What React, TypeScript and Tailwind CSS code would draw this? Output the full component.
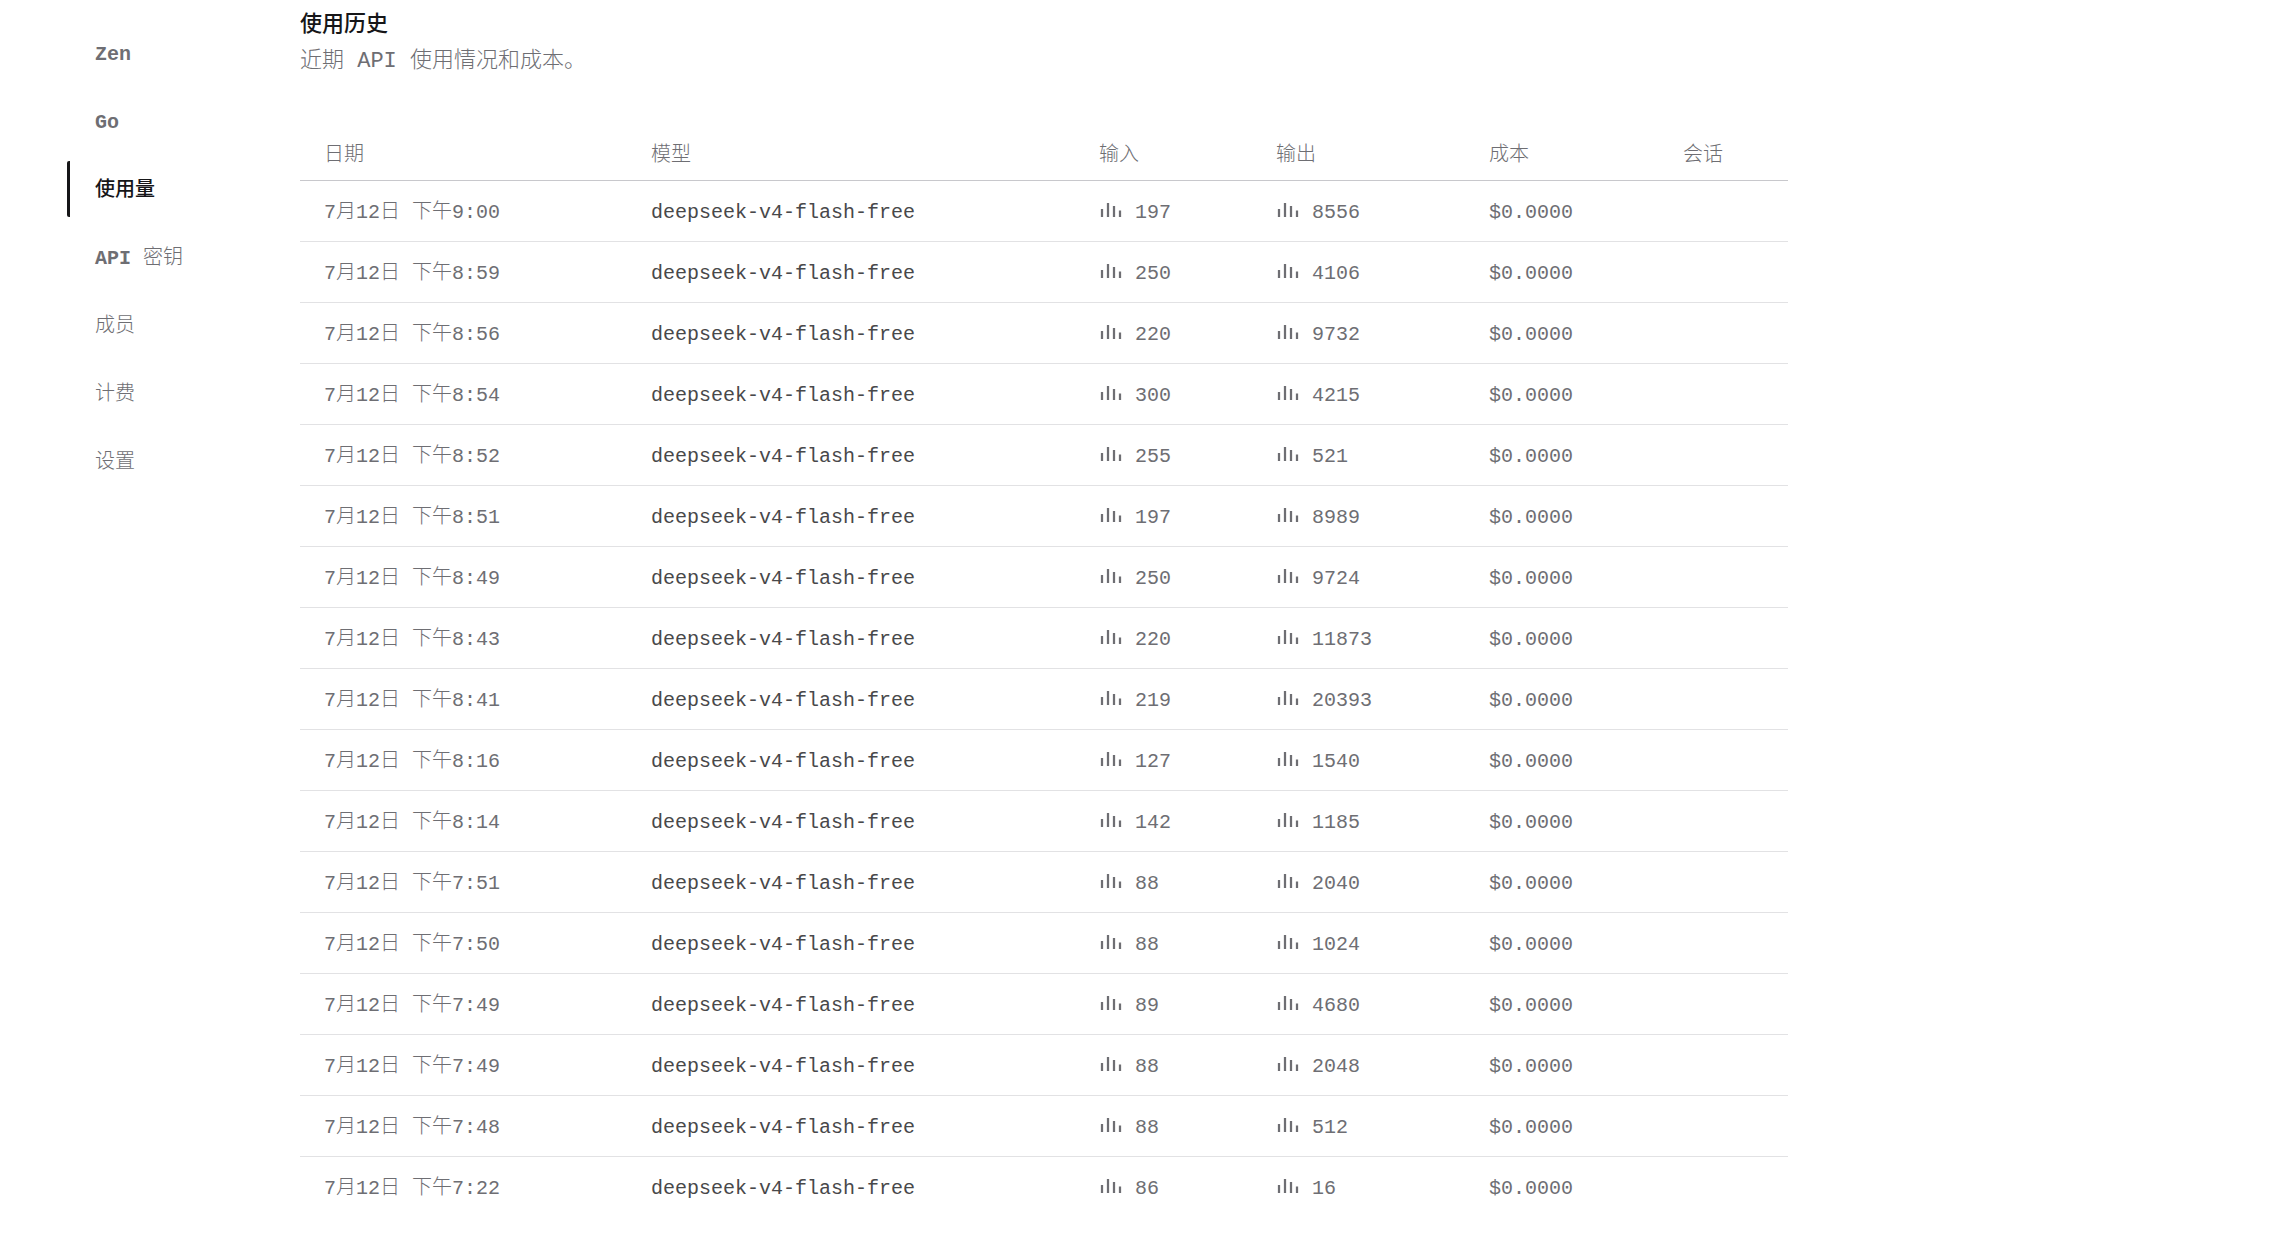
import clsx from 'clsx';

interface UsageRow {
  time: string;
  input: number;
  output: number;
}

const MODEL = 'deepseek-v4-flash-free';

const NAV_ITEMS = ['Zen', 'Go', '使用量', 'API 密钥', '成员', '计费', '设置'];

const COLUMNS = [
  { label: '日期', width: 'w-[327px]' },
  { label: '模型', width: 'w-[448px]' },
  { label: '输入', width: 'w-[177px]' },
  { label: '输出', width: 'w-[213px]' },
  { label: '成本', width: 'w-[194px]' },
  { label: '会话', width: 'w-[129px]' },
];

const ROWS: UsageRow[] = [
  { time: '7月12日 下午9:00', input: 197, output: 8556 },
  { time: '7月12日 下午8:59', input: 250, output: 4106 },
  { time: '7月12日 下午8:56', input: 220, output: 9732 },
  { time: '7月12日 下午8:54', input: 300, output: 4215 },
  { time: '7月12日 下午8:52', input: 255, output: 521 },
  { time: '7月12日 下午8:51', input: 197, output: 8989 },
  { time: '7月12日 下午8:49', input: 250, output: 9724 },
  { time: '7月12日 下午8:43', input: 220, output: 11873 },
  { time: '7月12日 下午8:41', input: 219, output: 20393 },
  { time: '7月12日 下午8:16', input: 127, output: 1540 },
  { time: '7月12日 下午8:14', input: 142, output: 1185 },
  { time: '7月12日 下午7:51', input: 88, output: 2040 },
  { time: '7月12日 下午7:50', input: 88, output: 1024 },
  { time: '7月12日 下午7:49', input: 89, output: 4680 },
  { time: '7月12日 下午7:49', input: 88, output: 2048 },
  { time: '7月12日 下午7:48', input: 88, output: 512 },
  { time: '7月12日 下午7:22', input: 86, output: 16 },
];

function BreakdownIcon() {
  return (
    <svg className="size-6 shrink-0" viewBox="0 0 24 24" fill="none" stroke="currentColor" strokeWidth="2.25" aria-hidden="true">
      <path d="M3 8v8M9 2v14M15 5v11M21 9.5v6.5" />
    </svg>
  );
}

function TokenCell({ label, value }: { label: string; value: number }) {
  return (
    <td className="px-6 pt-1">
      <div className="flex items-center gap-3">
        <button type="button" aria-label={`${label} ${value}`}>
          <BreakdownIcon />
        </button>
        <span>{value}</span>
      </div>
    </td>
  );
}

function Sidebar() {
  return (
    <nav className="w-[233px] shrink-0 pt-[25px]">
      <ul className="flex flex-col gap-3">
        {NAV_ITEMS.map(item => {
          const isActive = item === '使用量';
          return (
            <li key={item}>
              <a
                href="#"
                aria-current={isActive ? 'page' : undefined}
                className={clsx(
                  'flex h-14 items-center rounded-l-xs border-l-3 pt-1 pl-[25px]',
                  isActive ? 'border-[#161618] font-medium text-[#161618]' : 'border-transparent',
                  /^[A-Z]/.test(item) && 'font-semibold'
                )}
              >
                {item === 'API 密钥' ? (
                  <span className="whitespace-pre">API <span className="font-light">密钥</span></span>
                ) : (
                  item
                )}
              </a>
            </li>
          );
        })}
      </ul>
    </nav>
  );
}

export default function App() {
  return (
    <div className="flex min-h-screen bg-white pl-[67px] font-['Liberation_Mono','Noto_Sans_CJK_SC',monospace] text-xl font-light text-[#6e6e73]">
      <Sidebar />

      <main className="min-w-0 max-w-[1488px] flex-1 pt-2">
        <h1 className="text-[22px] leading-9 font-medium text-[#161618]">使用历史</h1>
        <p className="text-[22px] leading-9">近期 API 使用情况和成本。</p>

        <table className="mt-11 w-full table-fixed border-collapse text-left whitespace-nowrap">
          <thead>
            <tr className="h-14 border-b border-[#c8c8cc]">
              {COLUMNS.map(c => (
                <th key={c.label} className={clsx('px-6 pt-2 font-light', c.width)}>{c.label}</th>
              ))}
            </tr>
          </thead>
          <tbody>
            {ROWS.map((r, i) => (
              <tr key={i} className="h-[61px] border-b border-[#e2e2e4] last:border-b-0">
                <td className="px-6 pt-1">{r.time}</td>
                <td className="px-6 pt-1 text-[#48484a]">{MODEL}</td>
                <TokenCell label="输入" value={r.input} />
                <TokenCell label="输出" value={r.output} />
                <td className="px-6 pt-1">$0.0000</td>
                <td className="px-6" />
              </tr>
            ))}
          </tbody>
        </table>
      </main>
    </div>
  );
}
